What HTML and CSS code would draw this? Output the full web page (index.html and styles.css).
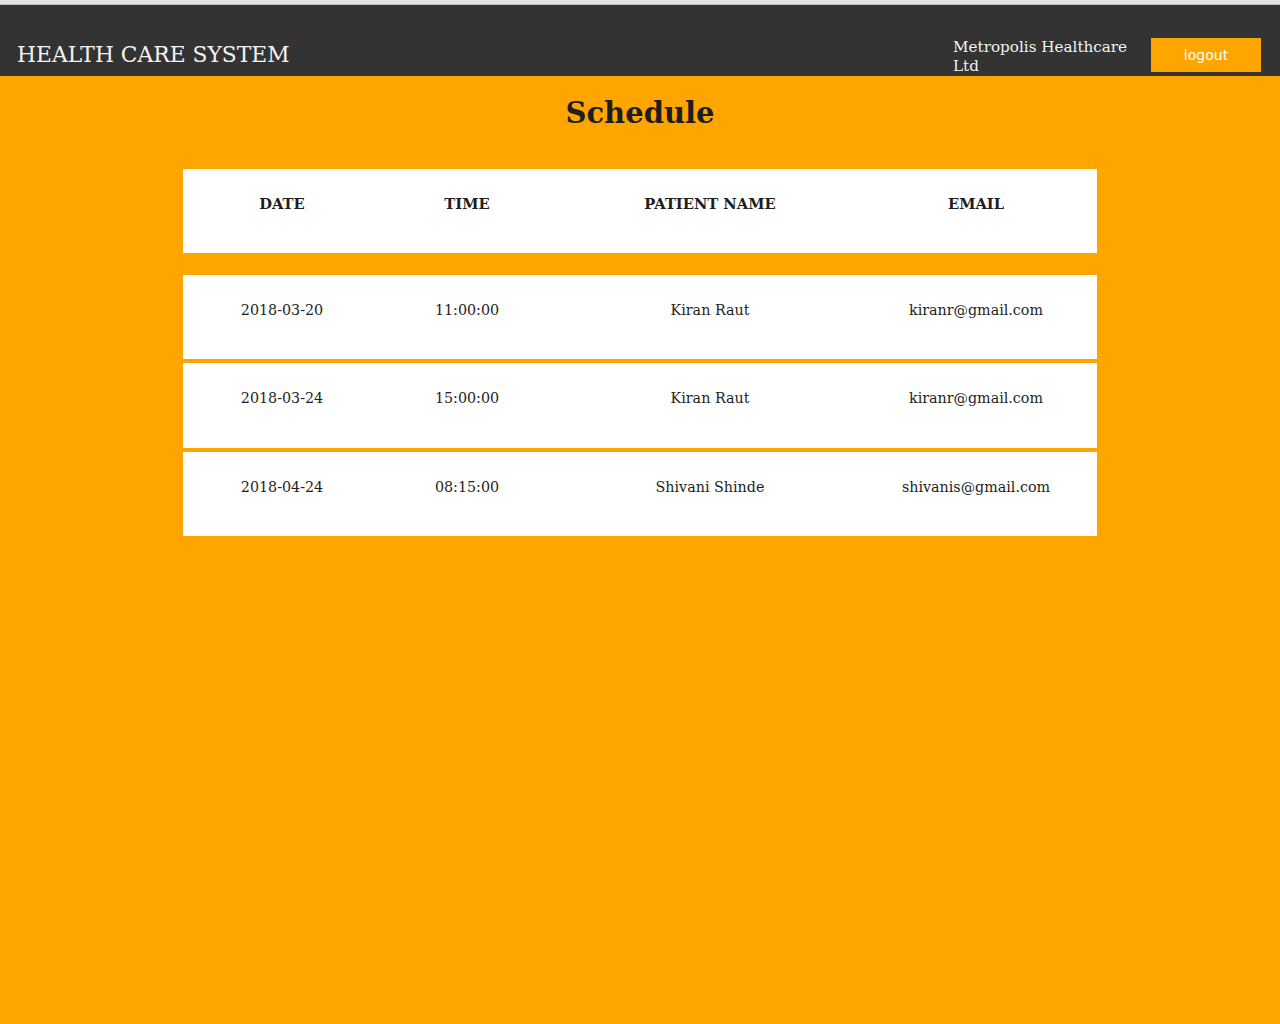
FILE: index.html
```html
<!DOCTYPE html>
<html>
<head>
<meta charset="utf-8">
<title>Schedule</title>
<link rel="stylesheet" href="styles.css">
</head>
<body>
<header class="topbar">
  <div class="brand">HEALTH CARE SYSTEM</div>
  <div class="right">
    <div class="company">Metropolis Healthcare Ltd</div>
    <button class="logout">logout</button>
  </div>
</header>
<main class="content">
  <h1 class="title">Schedule</h1>
  <table class="schedule">
    <thead>
      <tr><th class="c1">DATE</th><th class="c2">TIME</th><th class="c3">PATIENT NAME</th><th class="c4">EMAIL</th></tr>
    </thead>
    <tbody>
      <tr class="first"><td>2018-03-20</td><td>11:00:00</td><td>Kiran Raut</td><td class="last">kiranr@gmail.com</td></tr>
      <tr><td>2018-03-24</td><td>15:00:00</td><td>Kiran Raut</td><td class="last">kiranr@gmail.com</td></tr>
      <tr><td>2018-04-24</td><td>08:15:00</td><td>Shivani Shinde</td><td class="last">shivanis@gmail.com</td></tr>
    </tbody>
  </table>
</main>
</body>
</html>
```
FILE: styles.css
```css
html, body {
  margin: 0;
  padding: 0;
}
body {
  background: #ffa500;
  font-family: "DejaVu Serif", serif;
  color: #1e1e1e;
  min-height: 1024px;
}
.topbar {
  background: #333333;
  border-top: 4px solid #e2e2e2;
  box-shadow: inset 0 1px 0 #bdbdbd;
  height: 76px;
  box-sizing: border-box;
  display: flex;
  justify-content: space-between;
  align-items: flex-end;
  padding: 0 19px 4px 17px;
}
.brand {
  color: #f2f2f2;
  font-size: 21.8px;
  line-height: 26px;
  margin-bottom: 4px;
}
.right {
  display: flex;
  align-items: flex-end;
  gap: 16px;
}
.company {
  color: #f2f2f2;
  font-size: 15.2px;
  line-height: 19px;
  width: 182px;
  margin-bottom: -4px;
}
.logout {
  background: #ffa500;
  color: #ffffff;
  border: none;
  font-family: "DejaVu Sans", sans-serif;
  font-size: 14px;
  width: 110px;
  height: 34px;
  padding: 0;
}
.content {
  padding-top: 13px;
}
.title {
  text-align: center;
  font-size: 29px;
  line-height: 48px;
  margin: 0 0 28px;
}
.schedule {
  margin: 0 auto;
  width: 914px;
  border-collapse: separate;
  border-spacing: 0 4px;
  font-size: 14.3px;
}
.schedule th, .schedule td {
  background: #ffffff;
  background-clip: padding-box;
  text-align: center;
  vertical-align: top;
  height: 84px;
  box-sizing: border-box;
  padding: 27px 0 0;
}
.schedule th {
  font-size: 14.7px;
  font-weight: bold;
  padding-top: 26px;
}
.schedule th.c4, .schedule td.last {
  padding-right: 12px;
}
.schedule tr.first td {
  border-top: 18px solid transparent;
  height: 102px;
}
.schedule tbody tr:not(.first) td {
  height: 84.5px;
}
.c1 { width: 198px; }
.c2 { width: 172px; }
.c3 { width: 314px; }
.c4 { width: 230px; }
```
